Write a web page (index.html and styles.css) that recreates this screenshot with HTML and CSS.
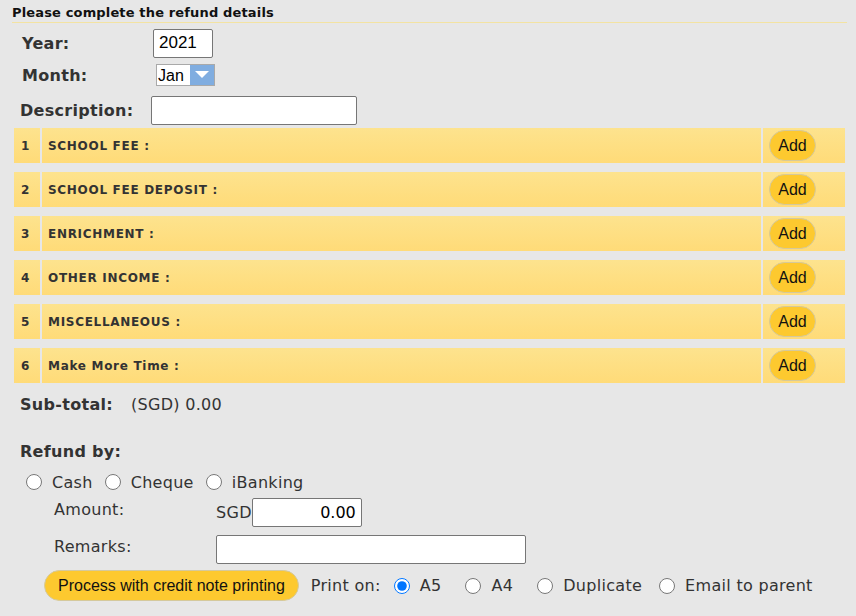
FILE: index.html
```html
<!DOCTYPE html>
<html lang="en">
<head>
  <meta charset="UTF-8">
  <title>Refund Details</title>
  <link rel="stylesheet" href="styles.css">
</head>
<body>
  <div class="panel">
    <h1 class="panel-title">Please complete the refund details</h1>

    <div class="meta">
      <div class="meta-row year-row">
        <label class="meta-label year-label" for="year">Year:</label>
        <input type="text" id="year" class="year-input" value="2021">
      </div>
      <div class="meta-row month-row">
        <label class="meta-label year-label" for="month">Month:</label>
        <div class="month-select">
          <select id="month">
            <option>Jan</option>
          </select>
          <span class="month-arrow">
            <svg width="14" height="8" viewBox="0 0 14 8"><polygon points="0,0 14,0 7,7" fill="#fff"/></svg>
          </span>
        </div>
      </div>
      <div class="meta-row desc-row">
        <label class="meta-label" for="description">Description:</label>
        <input type="text" id="description" class="desc-input">
      </div>
    </div>

    <div class="items">
      <div class="item">
        <div class="item-no">1</div>
        <div class="item-label">SCHOOL FEE :</div>
        <div class="item-action"><button class="btn-add">Add</button></div>
      </div>
      <div class="item">
        <div class="item-no">2</div>
        <div class="item-label">SCHOOL FEE DEPOSIT :</div>
        <div class="item-action"><button class="btn-add">Add</button></div>
      </div>
      <div class="item">
        <div class="item-no">3</div>
        <div class="item-label">ENRICHMENT :</div>
        <div class="item-action"><button class="btn-add">Add</button></div>
      </div>
      <div class="item">
        <div class="item-no">4</div>
        <div class="item-label">OTHER INCOME :</div>
        <div class="item-action"><button class="btn-add">Add</button></div>
      </div>
      <div class="item">
        <div class="item-no">5</div>
        <div class="item-label">MISCELLANEOUS :</div>
        <div class="item-action"><button class="btn-add">Add</button></div>
      </div>
      <div class="item">
        <div class="item-no">6</div>
        <div class="item-label">Make More Time :</div>
        <div class="item-action"><button class="btn-add">Add</button></div>
      </div>
    </div>

    <div class="subtotal"><span class="subtotal-label">Sub-total:</span><span>(SGD) 0.00</span></div>

    <div class="refund-title">Refund by:</div>
    <div class="refund-methods">
      <input type="radio" name="method" id="cash"><label for="cash">Cash</label>
      <input type="radio" name="method" id="cheque"><label for="cheque">Cheque</label>
      <input type="radio" name="method" id="ibanking"><label for="ibanking">iBanking</label>
    </div>

    <div class="refund-grid">
      <label class="grid-label" for="amount">Amount:</label>
      <div class="amount-field">
        <span>SGD</span>
        <input type="text" id="amount" class="amount-input" value="0.00">
      </div>
      <label class="grid-label" for="remarks">Remarks:</label>
      <input type="text" id="remarks" class="remarks-input">
    </div>

    <div class="actions">
      <button class="btn-process">Process with credit note printing</button>
      <span class="print-label">Print on:</span>
      <input type="radio" name="paper" id="a5" checked><label for="a5" class="opt">A5</label>
      <input type="radio" name="paper" id="a4"><label for="a4" class="opt">A4</label>
      <input type="radio" name="paper" id="dup"><label for="dup" class="opt opt-dup">Duplicate</label>
      <input type="radio" name="paper" id="email"><label for="email" class="opt">Email to parent</label>
    </div>
  </div>
</body>
</html>
```

FILE: styles.css
```css
body {
  margin: 0;
  background: #e7e7e7;
  font-family: "DejaVu Sans", Verdana, sans-serif;
  color: #333;
}

.panel {
  padding: 0 9px 0 12px;
}

.panel-title {
  margin: 0;
  padding-top: 4px;
  font-size: 13px;
  line-height: 18px;
  font-weight: bold;
  letter-spacing: 0.15px;
  color: #111;
  border-bottom: 1px solid #f3e3a2;
}

/* year / month / description */
.meta {
  padding-left: 8px;
}

.meta-row {
  display: flex;
  align-items: center;
}

.year-row {
  margin-top: 6px;
  height: 28px;
}

.month-row {
  margin-top: 4px;
  height: 28px;
}

.desc-row {
  margin-top: 7px;
  height: 28px;
}

.meta-label {
  width: 131px;
  font-size: 16px;
  font-weight: bold;
  letter-spacing: 0.3px;
  color: #333;
}

.year-label {
  padding-left: 2px;
  width: 129px;
}

input[type="text"] {
  box-sizing: border-box;
  height: 29px;
  border: 1px solid #767676;
  border-radius: 2px;
  background: #fff;
  font-family: "Liberation Sans", Arial, sans-serif;
  font-size: 17px;
  padding: 1px 5px;
  color: #000;
}

.year-input {
  width: 60px;
  height: 28px;
  margin-left: 2px;
}

.desc-input {
  width: 206px;
  height: 28px;
}

.month-select {
  display: flex;
  height: 20px;
  margin-left: 5px;
  border: 1px solid #a9a9a9;
  background: #fff;
}

.month-select select {
  appearance: none;
  -webkit-appearance: none;
  border: none;
  outline: none;
  background: #fff;
  font-family: "Liberation Sans", Arial, sans-serif;
  font-size: 16px;
  color: #000;
  padding: 0 0 0 1px;
  width: 33px;
  height: 20px;
}

.month-arrow {
  width: 24px;
  background: #80ade0;
  display: flex;
  align-items: center;
  justify-content: center;
}

/* fee rows */
.items {
  display: flex;
  flex-direction: column;
  gap: 9px;
  margin: 4px 2px 0 2px;
}

.item {
  display: flex;
  gap: 2px;
  height: 35px;
}

.item > div {
  background: linear-gradient(#fde38e, #ffdb78);
  display: flex;
  align-items: center;
}

.item-no {
  width: 26px;
  padding-left: 7px;
  box-sizing: border-box;
  font-size: 12px;
  font-weight: bold;
  color: #333;
}

.item-label {
  flex: 1;
  padding-left: 6px;
  font-size: 12px;
  font-weight: bold;
  letter-spacing: 0.7px;
  color: #333;
}

.item-action {
  width: 82px;
  padding-left: 6px;
  box-sizing: border-box;
}

.btn-add {
  width: 47px;
  height: 31px;
  border: 1px solid #d5c99c;
  border-radius: 16px;
  background: #fdc92f;
  font-family: "Liberation Sans", Arial, sans-serif;
  font-size: 16px;
  color: #111;
  padding: 0;
  cursor: pointer;
}

/* totals and refund */
.subtotal {
  margin-top: 12px;
  padding-left: 8px;
  font-size: 16px;
  line-height: 20px;
  letter-spacing: 0.3px;
}

.subtotal-label {
  display: inline-block;
  width: 111px;
  font-weight: bold;
}

.refund-title {
  margin-top: 27px;
  padding-left: 8px;
  font-size: 16px;
  font-weight: bold;
  letter-spacing: 0.3px;
  line-height: 20px;
}

.refund-methods {
  display: flex;
  align-items: center;
  margin-top: 10px;
  padding-left: 14px;
  font-size: 16px;
  letter-spacing: 0.3px;
  height: 20px;
}

input[type="radio"] {
  width: 16px;
  height: 16px;
  margin: 0 10px 0 0;
}

.refund-methods label {
  margin-right: 12px;
}

.refund-grid {
  display: grid;
  grid-template-columns: 162px auto;
  row-gap: 8px;
  margin-top: 6px;
  padding-left: 42px;
  font-size: 16px;
  letter-spacing: 0.3px;
}

.grid-label {
  padding-top: 2px;
}

.amount-field {
  display: flex;
  align-items: center;
}

.amount-input {
  width: 110px;
  text-align: right;
  font-family: "DejaVu Sans", Verdana, sans-serif !important;
  font-size: 16px !important;
}

.remarks-input {
  width: 310px;
}

.actions {
  display: flex;
  align-items: center;
  margin-top: 6px;
  padding-left: 32px;
  font-size: 16px;
  letter-spacing: 0.3px;
}

.btn-process {
  height: 31px;
  padding: 0 13px;
  border: 1px solid #d5c99c;
  border-radius: 16px;
  background: #fdc92f;
  font-family: "Liberation Sans", Arial, sans-serif;
  font-size: 16px;
  letter-spacing: 0;
  color: #111;
  margin-right: 12px;
  cursor: pointer;
}

.print-label {
  margin-right: 13px;
}

.opt {
  margin-right: 24px;
}

.opt-dup {
  margin-right: 17px;
}
```
